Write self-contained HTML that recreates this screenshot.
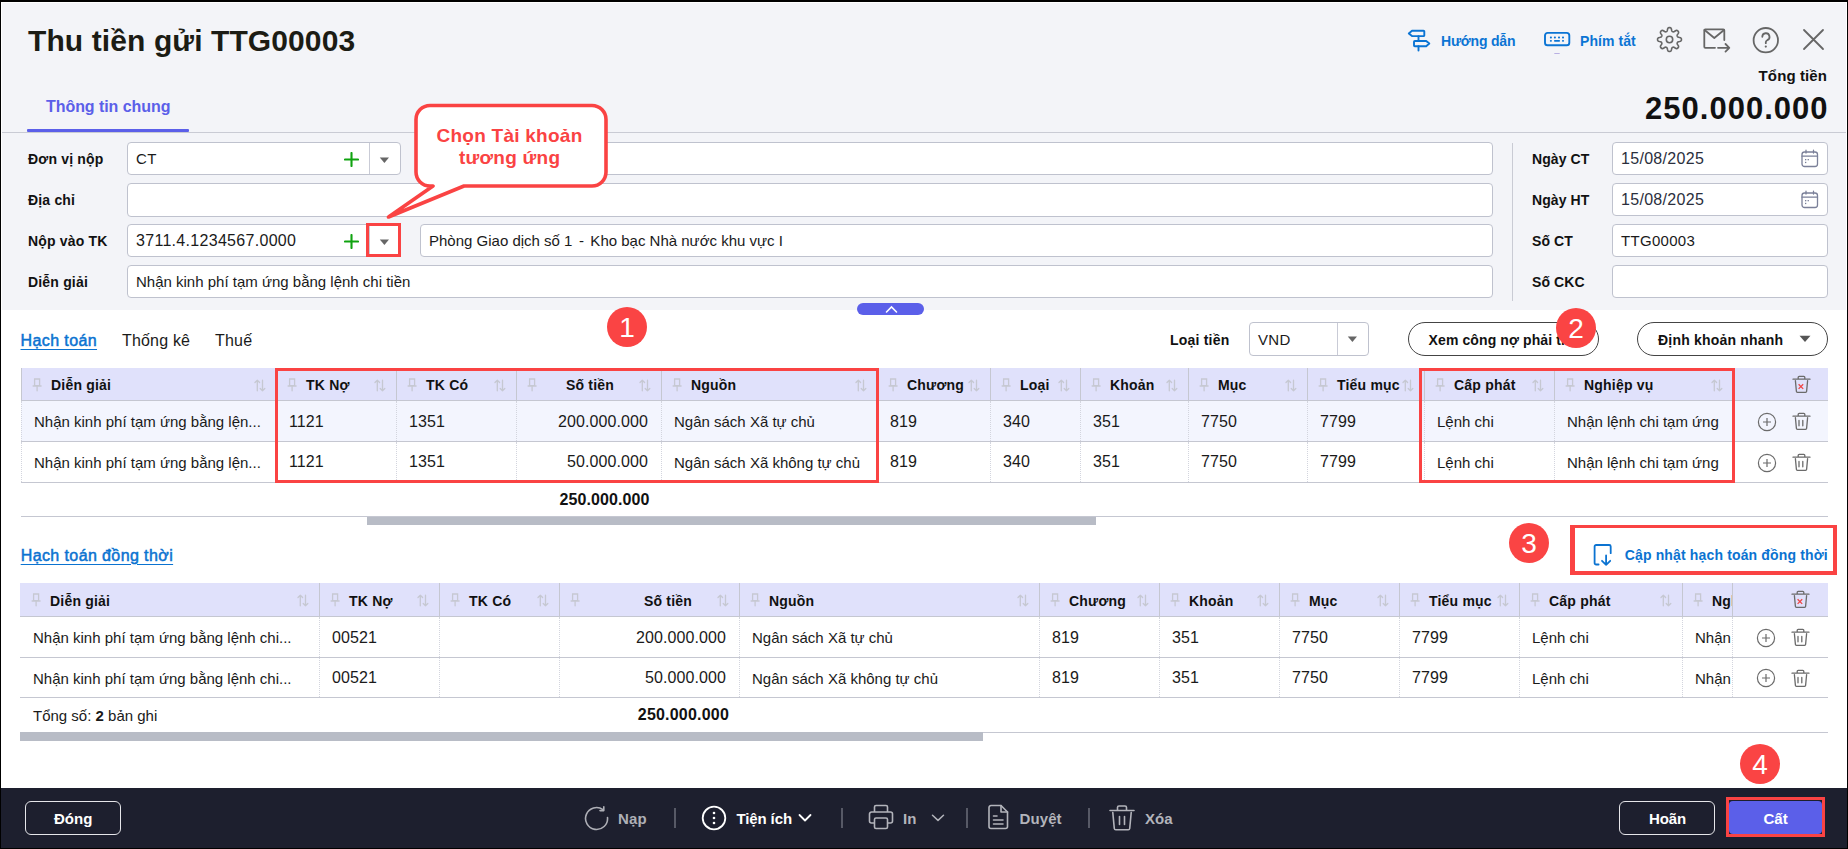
<!DOCTYPE html><html><head><meta charset="utf-8"><style>
html,body{margin:0;padding:0;}
body{width:1848px;height:849px;overflow:hidden;background:#000;position:relative;font-family:'Liberation Sans', sans-serif;}
.t{position:absolute;white-space:nowrap;font-family:'Liberation Sans', sans-serif;}
.r{position:absolute;box-sizing:border-box;}
</style></head><body>
<div class="r" style="left:1px;top:2px;width:1846px;height:846px;background:#fff;"></div>
<div class="r" style="left:2px;top:3px;width:1844px;height:307px;background:#f3f4f8;"></div>
<div class="r" style="left:1px;top:788px;width:1846px;height:60px;background:#1d1f2e;"></div>
<div class="t" style="left:28px;top:25.6px;font-size:30px;line-height:30px;font-weight:bold;color:#1c1c14;letter-spacing:0.1px;">Thu tiền gửi TTG00003</div>
<svg class="r" style="left:1406px;top:28px" width="26" height="25" viewBox="0 0 26 25"><g fill="none" stroke="#0b74d4" stroke-width="1.9" stroke-linejoin="round" stroke-linecap="round"><path d="M6 2.8 H17.5 a0.8 0.8 0 0 1 0.8 .8 V7.3 a0.8 .8 0 0 1 -.8 .8 H6 L2.8 5.4 Z"/><path d="M8.8 13 H20.2 L23.3 15.6 L20.2 18.2 H8.8 a.8 .8 0 0 1 -.8 -.8 V13.8 a.8 .8 0 0 1 .8 -.8Z"/><path d="M12.5 8.1 V13 M12.5 18.2 V22.6"/></g></svg>
<div class="t" style="left:1441px;top:33.8px;font-size:14px;line-height:14px;font-weight:bold;color:#0b74d4;letter-spacing:-0.2px;">Hướng dẫn</div>
<svg class="r" style="left:1543px;top:31px" width="28" height="24" viewBox="0 0 28 24"><g fill="none" stroke="#0b74d4" stroke-width="1.9"><rect x="2" y="1.9" width="24.3" height="12.4" rx="2.6"/></g><g fill="#0b74d4"><rect x="6.9" y="5.6" width="2" height="1.9" rx=".8"/><rect x="10.9" y="5.6" width="2" height="1.9" rx=".8"/><rect x="15" y="5.6" width="2" height="1.9" rx=".8"/><rect x="19" y="5.6" width="2" height="1.9" rx=".8"/><rect x="6.9" y="8.9" width="2" height="1.9" rx=".8"/><rect x="11" y="8.9" width="6" height="1.9" rx=".8"/><rect x="19" y="8.9" width="2" height="1.9" rx=".8"/><rect x="11.3" y="22" width="5.4" height="0.9" fill="#b3a9e0"/></g></svg>
<div class="t" style="left:1580px;top:33.8px;font-size:14px;line-height:14px;font-weight:bold;color:#0b74d4;letter-spacing:0.07px;">Phím tắt</div>
<svg class="r" style="left:1656px;top:25.8px" width="27" height="27" viewBox="0 0 27 27"><g fill="none" stroke="#666" stroke-width="1.6" stroke-linejoin="round"><path d="M25.45 13.50 L25.42 13.97 L25.30 14.43 L25.02 14.86 L24.43 15.23 L23.50 15.49 L22.57 15.68 L21.97 15.89 L21.65 16.15 L21.45 16.43 L21.31 16.73 L21.20 17.05 L21.13 17.39 L21.18 17.80 L21.46 18.38 L21.98 19.17 L22.46 20.01 L22.61 20.68 L22.50 21.19 L22.26 21.60 L21.95 21.95 L21.60 22.26 L21.19 22.50 L20.68 22.61 L20.01 22.46 L19.17 21.98 L18.38 21.46 L17.80 21.18 L17.39 21.13 L17.05 21.20 L16.73 21.31 L16.43 21.45 L16.15 21.65 L15.89 21.97 L15.68 22.57 L15.49 23.50 L15.23 24.43 L14.86 25.02 L14.43 25.30 L13.97 25.42 L13.50 25.45 L13.03 25.42 L12.57 25.30 L12.14 25.02 L11.77 24.43 L11.51 23.50 L11.32 22.57 L11.11 21.97 L10.85 21.65 L10.57 21.45 L10.27 21.31 L9.95 21.20 L9.61 21.13 L9.20 21.18 L8.62 21.46 L7.83 21.98 L6.99 22.46 L6.32 22.61 L5.81 22.50 L5.40 22.26 L5.05 21.95 L4.74 21.60 L4.50 21.19 L4.39 20.68 L4.54 20.01 L5.02 19.17 L5.54 18.38 L5.82 17.80 L5.87 17.39 L5.80 17.05 L5.69 16.73 L5.55 16.43 L5.35 16.15 L5.03 15.89 L4.43 15.68 L3.50 15.49 L2.57 15.23 L1.98 14.86 L1.70 14.43 L1.58 13.97 L1.55 13.50 L1.58 13.03 L1.70 12.57 L1.98 12.14 L2.57 11.77 L3.50 11.51 L4.43 11.32 L5.03 11.11 L5.35 10.85 L5.55 10.57 L5.69 10.27 L5.80 9.95 L5.87 9.61 L5.82 9.20 L5.54 8.62 L5.02 7.83 L4.54 6.99 L4.39 6.32 L4.50 5.81 L4.74 5.40 L5.05 5.05 L5.40 4.74 L5.81 4.50 L6.32 4.39 L6.99 4.54 L7.83 5.02 L8.62 5.54 L9.20 5.82 L9.61 5.87 L9.95 5.80 L10.27 5.69 L10.57 5.55 L10.85 5.35 L11.11 5.03 L11.32 4.43 L11.51 3.50 L11.77 2.57 L12.14 1.98 L12.57 1.70 L13.03 1.58 L13.50 1.55 L13.97 1.58 L14.43 1.70 L14.86 1.98 L15.23 2.57 L15.49 3.50 L15.68 4.43 L15.89 5.03 L16.15 5.35 L16.43 5.55 L16.73 5.69 L17.05 5.80 L17.39 5.87 L17.80 5.82 L18.38 5.54 L19.17 5.02 L20.01 4.54 L20.68 4.39 L21.19 4.50 L21.60 4.74 L21.95 5.05 L22.26 5.40 L22.50 5.81 L22.61 6.32 L22.46 6.99 L21.98 7.83 L21.46 8.62 L21.18 9.20 L21.13 9.61 L21.20 9.95 L21.31 10.27 L21.45 10.57 L21.65 10.85 L21.97 11.11 L22.57 11.32 L23.50 11.51 L24.43 11.77 L25.02 12.14 L25.30 12.57 L25.42 13.03 Z"/><circle cx="13.5" cy="13.5" r="3.2"/></g></svg>
<svg class="r" style="left:1702px;top:27px" width="30" height="28" viewBox="0 0 30 28"><g fill="none" stroke="#666" stroke-width="1.8" stroke-linecap="round" stroke-linejoin="round"><path d="M22.3 13 V3.3 a1 1 0 0 0 -1 -1 H3.3 a1 1 0 0 0 -1 1 V19.8 a1 1 0 0 0 1 1 H13"/><path d="M2.6 3 L12.3 11 L22 3"/><path d="M16 20.8 H27.3 M23.5 17 L27.3 20.8 L23.5 24.6"/></g></svg>
<svg class="r" style="left:1752px;top:26px" width="28" height="28" viewBox="0 0 28 28"><g fill="none" stroke="#666" stroke-width="1.8" stroke-linecap="round"><circle cx="13.8" cy="14.2" r="12.2"/><path d="M10.3 10.8 a3.6 3.6 0 1 1 4.9 3.4 c-.9 .4 -1.4 1 -1.4 2 v1"/></g><circle cx="13.8" cy="20.6" r="1.1" fill="#666"/></svg>
<svg class="r" style="left:1801px;top:27px" width="25" height="25" viewBox="0 0 25 25"><g stroke="#666" stroke-width="1.8" stroke-linecap="round"><path d="M3 3 L22 22 M22 3 L3 22"/></g></svg>
<div class="t" style="right:21px;text-align:right;top:68.3px;font-size:15px;line-height:15px;font-weight:bold;color:#111;letter-spacing:0.1px;">Tổng tiền</div>
<div class="t" style="right:19.5px;text-align:right;top:93.3px;font-size:31px;line-height:31px;font-weight:bold;color:#111;letter-spacing:1.0px;">250.000.000</div>
<div class="t" style="left:46px;top:99.3px;font-size:16px;line-height:16px;font-weight:bold;color:#5b5fe9;letter-spacing:-0.06px;">Thông tin chung</div>
<div class="r" style="left:27px;top:129px;width:162px;height:3px;background:#5b5fe9;border-radius:1px;"></div>
<div class="r" style="left:2px;top:132px;width:1844px;height:1px;background:#c9cbd4;"></div>
<div class="t" style="left:28px;top:152.4px;font-size:14px;line-height:14px;font-weight:bold;color:#111;letter-spacing:0.18px;">Đơn vị nộp</div>
<div class="t" style="left:28px;top:193.4px;font-size:14px;line-height:14px;font-weight:bold;color:#111;letter-spacing:0.18px;">Địa chỉ</div>
<div class="t" style="left:28px;top:234.4px;font-size:14px;line-height:14px;font-weight:bold;color:#111;letter-spacing:0.18px;">Nộp vào TK</div>
<div class="t" style="left:28px;top:275.4px;font-size:14px;line-height:14px;font-weight:bold;color:#111;letter-spacing:0.18px;">Diễn giải</div>
<div class="r" style="left:127px;top:142px;width:274px;height:33px;background:#fff;border:1px solid #bfc2ce;border-radius:4px;"></div>
<div class="r" style="left:420px;top:142px;width:1073px;height:33px;background:#fff;border:1px solid #bfc2ce;border-radius:4px;"></div>
<div class="r" style="left:127px;top:183px;width:1366px;height:33.5px;background:#fff;border:1px solid #bfc2ce;border-radius:4px;"></div>
<div class="r" style="left:127px;top:224px;width:274px;height:33px;background:#fff;border:1px solid #bfc2ce;border-radius:4px;"></div>
<div class="r" style="left:420px;top:224px;width:1073px;height:33px;background:#fff;border:1px solid #bfc2ce;border-radius:4px;"></div>
<div class="r" style="left:127px;top:265px;width:1366px;height:33px;background:#fff;border:1px solid #bfc2ce;border-radius:4px;"></div>
<div class="r" style="left:369px;top:143px;width:1px;height:31px;background:#c9cbd6;"></div>
<svg class="r" style="left:344px;top:151.5px" width="15" height="15" viewBox="0 0 15 15"><g stroke="#10a310" stroke-width="2.1" stroke-linecap="round"><path d="M7.5 1 V14 M1 7.5 H14"/></g></svg>
<svg class="r" style="left:379px;top:156.5px" width="11" height="7" viewBox="0 0 11 7"><path d="M0.8 0.5 H10 L5.4 6 Z" fill="#666"/></svg>
<div class="r" style="left:369px;top:225px;width:1px;height:31px;background:#c9cbd6;"></div>
<svg class="r" style="left:344px;top:233.5px" width="15" height="15" viewBox="0 0 15 15"><g stroke="#10a310" stroke-width="2.1" stroke-linecap="round"><path d="M7.5 1 V14 M1 7.5 H14"/></g></svg>
<svg class="r" style="left:379px;top:238.5px" width="11" height="7" viewBox="0 0 11 7"><path d="M0.8 0.5 H10 L5.4 6 Z" fill="#666"/></svg>
<div class="t" style="left:136px;top:151.3px;font-size:15px;line-height:15px;font-weight:normal;color:#1a1a1a;letter-spacing:0.3px;">CT</div>
<div class="t" style="left:136px;top:232.5px;font-size:16px;line-height:16px;font-weight:normal;color:#1a1a1a;letter-spacing:0.3px;">3711.4.1234567.0000</div>
<div class="t" style="left:429px;top:233.3px;font-size:15px;line-height:15px;font-weight:normal;color:#1a1a1a;letter-spacing:0.0px;">Phòng Giao dịch số 1 <span style="margin:0 2.3px">-</span> Kho bạc Nhà nước khu vực I</div>
<div class="t" style="left:136px;top:274.3px;font-size:15px;line-height:15px;font-weight:normal;color:#1a1a1a;letter-spacing:0.0px;">Nhận kinh phí tạm ứng bằng lệnh chi tiền</div>
<div class="r" style="left:1512px;top:143px;width:1px;height:158px;background:#c9cbd4;"></div>
<div class="t" style="left:1532px;top:152.4px;font-size:14px;line-height:14px;font-weight:bold;color:#111;letter-spacing:0.1px;">Ngày CT</div>
<div class="r" style="left:1612px;top:142px;width:216px;height:33px;background:#fff;border:1px solid #bfc2ce;border-radius:4px;"></div>
<div class="t" style="left:1532px;top:193.4px;font-size:14px;line-height:14px;font-weight:bold;color:#111;letter-spacing:0.1px;">Ngày HT</div>
<div class="r" style="left:1612px;top:183px;width:216px;height:33px;background:#fff;border:1px solid #bfc2ce;border-radius:4px;"></div>
<div class="t" style="left:1532px;top:234.4px;font-size:14px;line-height:14px;font-weight:bold;color:#111;letter-spacing:0.1px;">Số CT</div>
<div class="r" style="left:1612px;top:224px;width:216px;height:33px;background:#fff;border:1px solid #bfc2ce;border-radius:4px;"></div>
<div class="t" style="left:1532px;top:275.4px;font-size:14px;line-height:14px;font-weight:bold;color:#111;letter-spacing:0.1px;">Số CKC</div>
<div class="r" style="left:1612px;top:265px;width:216px;height:33px;background:#fff;border:1px solid #bfc2ce;border-radius:4px;"></div>
<div class="t" style="left:1621px;top:150.8px;font-size:16px;line-height:16px;font-weight:normal;color:#2b2f3d;letter-spacing:0.3px;">15/08/2025</div>
<div class="t" style="left:1621px;top:191.8px;font-size:16px;line-height:16px;font-weight:normal;color:#2b2f3d;letter-spacing:0.3px;">15/08/2025</div>
<div class="t" style="left:1621px;top:233.3px;font-size:15px;line-height:15px;font-weight:normal;color:#1a1a1a;letter-spacing:0.3px;">TTG00003</div>
<svg class="r" style="left:1800px;top:149px" width="20" height="19" viewBox="0 0 20 19"><g fill="none" stroke="#7b8099" stroke-width="1.3" stroke-linecap="round"><rect x="2" y="3" width="15.5" height="14.5" rx="2.5"/><path d="M2 7.2 H17.5 M6 1.2 V4 M13.5 1.2 V4"/></g><g fill="#7b8099"><rect x="5" y="10" width="1.3" height="1.3"/><rect x="7.6" y="10" width="1.3" height="1.3"/><rect x="5" y="12.8" width="1.3" height="1.3"/></g></svg>
<svg class="r" style="left:1800px;top:190px" width="20" height="19" viewBox="0 0 20 19"><g fill="none" stroke="#7b8099" stroke-width="1.3" stroke-linecap="round"><rect x="2" y="3" width="15.5" height="14.5" rx="2.5"/><path d="M2 7.2 H17.5 M6 1.2 V4 M13.5 1.2 V4"/></g><g fill="#7b8099"><rect x="5" y="10" width="1.3" height="1.3"/><rect x="7.6" y="10" width="1.3" height="1.3"/><rect x="5" y="12.8" width="1.3" height="1.3"/></g></svg>
<div class="r" style="left:366px;top:223px;width:35px;height:34px;border:3px solid #fa4343;"></div>
<svg class="r" style="left:380px;top:98px" width="235" height="125" viewBox="0 0 235 125"><path d="M50 7.5 H212 a14 14 0 0 1 14 14 V74 a14 14 0 0 1 -14 14 H84 L8.5 119 L53 88 H50 a14 14 0 0 1 -14 -14 V21.5 a14 14 0 0 1 14 -14 Z" fill="#fff" stroke="#fa4343" stroke-width="3.6" stroke-linejoin="round"/></svg>
<div class="t" style="left:436.5px;top:125.7px;font-size:19px;line-height:19px;font-weight:bold;color:#fa4343;letter-spacing:0.25px;">Chọn Tài khoản</div>
<div class="t" style="left:459px;top:147.5px;font-size:19px;line-height:19px;font-weight:bold;color:#fa4343;letter-spacing:0.25px;">tương ứng</div>
<div class="r" style="left:857px;top:303px;width:67px;height:12px;background:#5b5fe9;border-radius:6px;"></div>
<svg class="r" style="left:884px;top:304px" width="15" height="10" viewBox="0 0 15 10"><path d="M2.5 8 L7.5 3 L12.5 8" fill="none" stroke="#fff" stroke-width="1.6" stroke-linecap="round"/></svg>
<div class="t" style="left:20.5px;top:332.5px;font-size:16px;line-height:16px;font-weight:normal;color:#0b73d1;letter-spacing:0.4px;-webkit-text-stroke:0.5px #0b73d1;text-decoration:underline;text-underline-offset:2.5px;text-decoration-thickness:1px;">Hạch toán</div>
<div class="t" style="left:122px;top:332.8px;font-size:16px;line-height:16px;font-weight:normal;color:#1a1a1a;letter-spacing:0.18px;">Thống kê</div>
<div class="t" style="left:215px;top:332.8px;font-size:16px;line-height:16px;font-weight:normal;color:#1a1a1a;letter-spacing:0.2px;">Thuế</div>
<div class="t" style="left:1170px;top:332.9px;font-size:14px;line-height:14px;font-weight:bold;color:#111;letter-spacing:0.21px;">Loại tiền</div>
<div class="r" style="left:1249px;top:322px;width:120px;height:34px;background:#fff;border:1px solid #bfc2ce;border-radius:4px;"></div>
<div class="r" style="left:1337px;top:323px;width:1px;height:32px;background:#c9cbd6;"></div>
<svg class="r" style="left:1347px;top:336px" width="11" height="7" viewBox="0 0 11 7"><path d="M0.8 0.5 H10 L5.4 6 Z" fill="#666"/></svg>
<div class="t" style="left:1258px;top:332.3px;font-size:15px;line-height:15px;font-weight:normal;color:#1a1a1a;letter-spacing:0.3px;">VND</div>
<div class="r" style="left:1408px;top:322px;width:191px;height:34px;border:1px solid #444;border-radius:17px;background:#fff;"></div>
<div class="t" style="left:1428.6px;top:333.1px;font-size:14px;line-height:14px;font-weight:bold;color:#111;letter-spacing:0.1px;">Xem công nợ phải thu</div>
<div class="r" style="left:1637px;top:322px;width:191px;height:34px;border:1px solid #444;border-radius:17px;background:#fff;"></div>
<div class="t" style="left:1658px;top:333.1px;font-size:14px;line-height:14px;font-weight:bold;color:#111;letter-spacing:0.2px;">Định khoản nhanh</div>
<svg class="r" style="left:1799px;top:335px" width="12" height="8" viewBox="0 0 12 8"><path d="M0.5 0.8 H11.5 L6 7 Z" fill="#555"/></svg>
<div class="r" style="left:21px;top:368px;width:1807px;height:33px;background:#e0e1fb;"></div>
<div class="r" style="left:21px;top:400px;width:1807px;height:1px;background:#c5c7d1;"></div>
<div class="r" style="left:21px;top:368px;width:1px;height:32px;background:#c5c7d1;"></div>
<div class="r" style="left:276px;top:368px;width:1px;height:32px;background:#c5c7d1;"></div>
<div class="r" style="left:396px;top:368px;width:1px;height:32px;background:#c5c7d1;"></div>
<div class="r" style="left:516px;top:368px;width:1px;height:32px;background:#c5c7d1;"></div>
<div class="r" style="left:661px;top:368px;width:1px;height:32px;background:#c5c7d1;"></div>
<div class="r" style="left:877px;top:368px;width:1px;height:32px;background:#c5c7d1;"></div>
<div class="r" style="left:990px;top:368px;width:1px;height:32px;background:#c5c7d1;"></div>
<div class="r" style="left:1080px;top:368px;width:1px;height:32px;background:#c5c7d1;"></div>
<div class="r" style="left:1188px;top:368px;width:1px;height:32px;background:#c5c7d1;"></div>
<div class="r" style="left:1307px;top:368px;width:1px;height:32px;background:#c5c7d1;"></div>
<div class="r" style="left:1424px;top:368px;width:1px;height:32px;background:#c5c7d1;"></div>
<div class="r" style="left:1554px;top:368px;width:1px;height:32px;background:#c5c7d1;"></div>
<div class="r" style="left:1733px;top:368px;width:1px;height:32px;background:#c5c7d1;"></div>
<svg class="r" style="left:31.5px;top:378px" width="10" height="14" viewBox="0 0 10 14"><g fill="none" stroke="#c6c8d2" stroke-width="1.3" stroke-linecap="round"><path d="M2.6 1 H7.6 V7.6 H2.6 Z M1.1 8 H9.1 M5.1 8 V12.8"/></g></svg>
<svg class="r" style="left:254px;top:378.5px" width="12" height="13" viewBox="0 0 12 13"><g fill="none" stroke="#c6c8d2" stroke-width="1.3" stroke-linecap="round" stroke-linejoin="round"><path d="M3.3 11.8 V1.2 M1 3.5 L3.3 1.2 L5.6 3.5 M8.5 1.2 V11.8 M6.2 9.5 L8.5 11.8 L10.8 9.5"/></g></svg>
<div class="t" style="left:51px;top:377.7px;font-size:14px;line-height:14px;font-weight:bold;color:#111;letter-spacing:0.2px;">Diễn giải</div>
<svg class="r" style="left:286.5px;top:378px" width="10" height="14" viewBox="0 0 10 14"><g fill="none" stroke="#c6c8d2" stroke-width="1.3" stroke-linecap="round"><path d="M2.6 1 H7.6 V7.6 H2.6 Z M1.1 8 H9.1 M5.1 8 V12.8"/></g></svg>
<svg class="r" style="left:374px;top:378.5px" width="12" height="13" viewBox="0 0 12 13"><g fill="none" stroke="#c6c8d2" stroke-width="1.3" stroke-linecap="round" stroke-linejoin="round"><path d="M3.3 11.8 V1.2 M1 3.5 L3.3 1.2 L5.6 3.5 M8.5 1.2 V11.8 M6.2 9.5 L8.5 11.8 L10.8 9.5"/></g></svg>
<div class="t" style="left:306px;top:377.7px;font-size:14px;line-height:14px;font-weight:bold;color:#111;letter-spacing:0.2px;">TK Nợ</div>
<svg class="r" style="left:406.5px;top:378px" width="10" height="14" viewBox="0 0 10 14"><g fill="none" stroke="#c6c8d2" stroke-width="1.3" stroke-linecap="round"><path d="M2.6 1 H7.6 V7.6 H2.6 Z M1.1 8 H9.1 M5.1 8 V12.8"/></g></svg>
<svg class="r" style="left:494px;top:378.5px" width="12" height="13" viewBox="0 0 12 13"><g fill="none" stroke="#c6c8d2" stroke-width="1.3" stroke-linecap="round" stroke-linejoin="round"><path d="M3.3 11.8 V1.2 M1 3.5 L3.3 1.2 L5.6 3.5 M8.5 1.2 V11.8 M6.2 9.5 L8.5 11.8 L10.8 9.5"/></g></svg>
<div class="t" style="left:426px;top:377.7px;font-size:14px;line-height:14px;font-weight:bold;color:#111;letter-spacing:0.2px;">TK Có</div>
<svg class="r" style="left:526.5px;top:378px" width="10" height="14" viewBox="0 0 10 14"><g fill="none" stroke="#c6c8d2" stroke-width="1.3" stroke-linecap="round"><path d="M2.6 1 H7.6 V7.6 H2.6 Z M1.1 8 H9.1 M5.1 8 V12.8"/></g></svg>
<svg class="r" style="left:639px;top:378.5px" width="12" height="13" viewBox="0 0 12 13"><g fill="none" stroke="#c6c8d2" stroke-width="1.3" stroke-linecap="round" stroke-linejoin="round"><path d="M3.3 11.8 V1.2 M1 3.5 L3.3 1.2 L5.6 3.5 M8.5 1.2 V11.8 M6.2 9.5 L8.5 11.8 L10.8 9.5"/></g></svg>
<div class="t" style="right:1234px;text-align:right;top:377.7px;font-size:14px;line-height:14px;font-weight:bold;color:#111;letter-spacing:0.2px;">Số tiền</div>
<svg class="r" style="left:671.5px;top:378px" width="10" height="14" viewBox="0 0 10 14"><g fill="none" stroke="#c6c8d2" stroke-width="1.3" stroke-linecap="round"><path d="M2.6 1 H7.6 V7.6 H2.6 Z M1.1 8 H9.1 M5.1 8 V12.8"/></g></svg>
<svg class="r" style="left:855px;top:378.5px" width="12" height="13" viewBox="0 0 12 13"><g fill="none" stroke="#c6c8d2" stroke-width="1.3" stroke-linecap="round" stroke-linejoin="round"><path d="M3.3 11.8 V1.2 M1 3.5 L3.3 1.2 L5.6 3.5 M8.5 1.2 V11.8 M6.2 9.5 L8.5 11.8 L10.8 9.5"/></g></svg>
<div class="t" style="left:691px;top:377.7px;font-size:14px;line-height:14px;font-weight:bold;color:#111;letter-spacing:0.2px;">Nguồn</div>
<svg class="r" style="left:887.5px;top:378px" width="10" height="14" viewBox="0 0 10 14"><g fill="none" stroke="#c6c8d2" stroke-width="1.3" stroke-linecap="round"><path d="M2.6 1 H7.6 V7.6 H2.6 Z M1.1 8 H9.1 M5.1 8 V12.8"/></g></svg>
<svg class="r" style="left:968px;top:378.5px" width="12" height="13" viewBox="0 0 12 13"><g fill="none" stroke="#c6c8d2" stroke-width="1.3" stroke-linecap="round" stroke-linejoin="round"><path d="M3.3 11.8 V1.2 M1 3.5 L3.3 1.2 L5.6 3.5 M8.5 1.2 V11.8 M6.2 9.5 L8.5 11.8 L10.8 9.5"/></g></svg>
<div class="t" style="left:907px;top:377.7px;font-size:14px;line-height:14px;font-weight:bold;color:#111;letter-spacing:0.2px;">Chương</div>
<svg class="r" style="left:1000.5px;top:378px" width="10" height="14" viewBox="0 0 10 14"><g fill="none" stroke="#c6c8d2" stroke-width="1.3" stroke-linecap="round"><path d="M2.6 1 H7.6 V7.6 H2.6 Z M1.1 8 H9.1 M5.1 8 V12.8"/></g></svg>
<svg class="r" style="left:1058px;top:378.5px" width="12" height="13" viewBox="0 0 12 13"><g fill="none" stroke="#c6c8d2" stroke-width="1.3" stroke-linecap="round" stroke-linejoin="round"><path d="M3.3 11.8 V1.2 M1 3.5 L3.3 1.2 L5.6 3.5 M8.5 1.2 V11.8 M6.2 9.5 L8.5 11.8 L10.8 9.5"/></g></svg>
<div class="t" style="left:1020px;top:377.7px;font-size:14px;line-height:14px;font-weight:bold;color:#111;letter-spacing:0.2px;">Loại</div>
<svg class="r" style="left:1090.5px;top:378px" width="10" height="14" viewBox="0 0 10 14"><g fill="none" stroke="#c6c8d2" stroke-width="1.3" stroke-linecap="round"><path d="M2.6 1 H7.6 V7.6 H2.6 Z M1.1 8 H9.1 M5.1 8 V12.8"/></g></svg>
<svg class="r" style="left:1166px;top:378.5px" width="12" height="13" viewBox="0 0 12 13"><g fill="none" stroke="#c6c8d2" stroke-width="1.3" stroke-linecap="round" stroke-linejoin="round"><path d="M3.3 11.8 V1.2 M1 3.5 L3.3 1.2 L5.6 3.5 M8.5 1.2 V11.8 M6.2 9.5 L8.5 11.8 L10.8 9.5"/></g></svg>
<div class="t" style="left:1110px;top:377.7px;font-size:14px;line-height:14px;font-weight:bold;color:#111;letter-spacing:0.2px;">Khoản</div>
<svg class="r" style="left:1198.5px;top:378px" width="10" height="14" viewBox="0 0 10 14"><g fill="none" stroke="#c6c8d2" stroke-width="1.3" stroke-linecap="round"><path d="M2.6 1 H7.6 V7.6 H2.6 Z M1.1 8 H9.1 M5.1 8 V12.8"/></g></svg>
<svg class="r" style="left:1285px;top:378.5px" width="12" height="13" viewBox="0 0 12 13"><g fill="none" stroke="#c6c8d2" stroke-width="1.3" stroke-linecap="round" stroke-linejoin="round"><path d="M3.3 11.8 V1.2 M1 3.5 L3.3 1.2 L5.6 3.5 M8.5 1.2 V11.8 M6.2 9.5 L8.5 11.8 L10.8 9.5"/></g></svg>
<div class="t" style="left:1218px;top:377.7px;font-size:14px;line-height:14px;font-weight:bold;color:#111;letter-spacing:0.2px;">Mục</div>
<svg class="r" style="left:1317.5px;top:378px" width="10" height="14" viewBox="0 0 10 14"><g fill="none" stroke="#c6c8d2" stroke-width="1.3" stroke-linecap="round"><path d="M2.6 1 H7.6 V7.6 H2.6 Z M1.1 8 H9.1 M5.1 8 V12.8"/></g></svg>
<svg class="r" style="left:1402px;top:378.5px" width="12" height="13" viewBox="0 0 12 13"><g fill="none" stroke="#c6c8d2" stroke-width="1.3" stroke-linecap="round" stroke-linejoin="round"><path d="M3.3 11.8 V1.2 M1 3.5 L3.3 1.2 L5.6 3.5 M8.5 1.2 V11.8 M6.2 9.5 L8.5 11.8 L10.8 9.5"/></g></svg>
<div class="t" style="left:1337px;top:377.7px;font-size:14px;line-height:14px;font-weight:bold;color:#111;letter-spacing:0.2px;">Tiểu mục</div>
<svg class="r" style="left:1434.5px;top:378px" width="10" height="14" viewBox="0 0 10 14"><g fill="none" stroke="#c6c8d2" stroke-width="1.3" stroke-linecap="round"><path d="M2.6 1 H7.6 V7.6 H2.6 Z M1.1 8 H9.1 M5.1 8 V12.8"/></g></svg>
<svg class="r" style="left:1532px;top:378.5px" width="12" height="13" viewBox="0 0 12 13"><g fill="none" stroke="#c6c8d2" stroke-width="1.3" stroke-linecap="round" stroke-linejoin="round"><path d="M3.3 11.8 V1.2 M1 3.5 L3.3 1.2 L5.6 3.5 M8.5 1.2 V11.8 M6.2 9.5 L8.5 11.8 L10.8 9.5"/></g></svg>
<div class="t" style="left:1454px;top:377.7px;font-size:14px;line-height:14px;font-weight:bold;color:#111;letter-spacing:0.2px;">Cấp phát</div>
<svg class="r" style="left:1564.5px;top:378px" width="10" height="14" viewBox="0 0 10 14"><g fill="none" stroke="#c6c8d2" stroke-width="1.3" stroke-linecap="round"><path d="M2.6 1 H7.6 V7.6 H2.6 Z M1.1 8 H9.1 M5.1 8 V12.8"/></g></svg>
<svg class="r" style="left:1711px;top:378.5px" width="12" height="13" viewBox="0 0 12 13"><g fill="none" stroke="#c6c8d2" stroke-width="1.3" stroke-linecap="round" stroke-linejoin="round"><path d="M3.3 11.8 V1.2 M1 3.5 L3.3 1.2 L5.6 3.5 M8.5 1.2 V11.8 M6.2 9.5 L8.5 11.8 L10.8 9.5"/></g></svg>
<div class="t" style="left:1584px;top:377.7px;font-size:14px;line-height:14px;font-weight:bold;color:#111;letter-spacing:0.2px;">Nghiệp vụ</div>
<svg class="r" style="left:1792px;top:375px" width="19" height="19" viewBox="0 0 19 19"><g fill="none" stroke="#6b6b6b" stroke-width="1.3" stroke-linecap="round" stroke-linejoin="round"><path d="M1 4.2 H18 M6.2 4.2 V2.3 a1 1 0 0 1 1 -1 H11.8 a1 1 0 0 1 1 1 V4.2 M3.4 5.6 L4.4 16.4 a1 1 0 0 0 1 .9 H13.6 a1 1 0 0 0 1 -.9 L15.6 5.6"/></g><path d="M6.6 9.3 L11.2 13.9 M11.2 9.3 L6.6 13.9" stroke="#f04545" stroke-width="1.3"/></svg>
<div class="r" style="left:21px;top:401px;width:1807px;height:41px;background:#f3f5fe;"></div>
<div class="r" style="left:21px;top:441px;width:1807px;height:1px;background:#c5c7d1;"></div>
<div class="r" style="left:21px;top:401px;width:1px;height:40px;border-left:1px dotted #d3d5de;"></div>
<div class="r" style="left:276px;top:401px;width:1px;height:40px;border-left:1px dotted #d3d5de;"></div>
<div class="r" style="left:396px;top:401px;width:1px;height:40px;border-left:1px dotted #d3d5de;"></div>
<div class="r" style="left:516px;top:401px;width:1px;height:40px;border-left:1px dotted #d3d5de;"></div>
<div class="r" style="left:661px;top:401px;width:1px;height:40px;border-left:1px dotted #d3d5de;"></div>
<div class="r" style="left:877px;top:401px;width:1px;height:40px;border-left:1px dotted #d3d5de;"></div>
<div class="r" style="left:990px;top:401px;width:1px;height:40px;border-left:1px dotted #d3d5de;"></div>
<div class="r" style="left:1080px;top:401px;width:1px;height:40px;border-left:1px dotted #d3d5de;"></div>
<div class="r" style="left:1188px;top:401px;width:1px;height:40px;border-left:1px dotted #d3d5de;"></div>
<div class="r" style="left:1307px;top:401px;width:1px;height:40px;border-left:1px dotted #d3d5de;"></div>
<div class="r" style="left:1424px;top:401px;width:1px;height:40px;border-left:1px dotted #d3d5de;"></div>
<div class="r" style="left:1554px;top:401px;width:1px;height:40px;border-left:1px dotted #d3d5de;"></div>
<div class="r" style="left:1733px;top:401px;width:1px;height:40px;border-left:1px dotted #d3d5de;"></div>
<div class="t" style="left:34px;top:414.3px;font-size:15px;line-height:15px;font-weight:normal;color:#1a1a1a;letter-spacing:0px;">Nhận kinh phí tạm ứng bằng lện...</div>
<div class="t" style="left:289px;top:413.5px;font-size:16px;line-height:16px;font-weight:normal;color:#1a1a1a;letter-spacing:0.1px;">1121</div>
<div class="t" style="left:409px;top:413.5px;font-size:16px;line-height:16px;font-weight:normal;color:#1a1a1a;letter-spacing:0.1px;">1351</div>
<div class="t" style="right:1200px;text-align:right;top:413.5px;font-size:16px;line-height:16px;font-weight:normal;color:#1a1a1a;letter-spacing:0.1px;">200.000.000</div>
<div class="t" style="left:674px;top:414.3px;font-size:15px;line-height:15px;font-weight:normal;color:#1a1a1a;letter-spacing:0px;">Ngân sách Xã tự chủ</div>
<div class="t" style="left:890px;top:413.5px;font-size:16px;line-height:16px;font-weight:normal;color:#1a1a1a;letter-spacing:0.1px;">819</div>
<div class="t" style="left:1003px;top:413.5px;font-size:16px;line-height:16px;font-weight:normal;color:#1a1a1a;letter-spacing:0.1px;">340</div>
<div class="t" style="left:1093px;top:413.5px;font-size:16px;line-height:16px;font-weight:normal;color:#1a1a1a;letter-spacing:0.1px;">351</div>
<div class="t" style="left:1201px;top:413.5px;font-size:16px;line-height:16px;font-weight:normal;color:#1a1a1a;letter-spacing:0.1px;">7750</div>
<div class="t" style="left:1320px;top:413.5px;font-size:16px;line-height:16px;font-weight:normal;color:#1a1a1a;letter-spacing:0.1px;">7799</div>
<div class="t" style="left:1437px;top:414.3px;font-size:15px;line-height:15px;font-weight:normal;color:#1a1a1a;letter-spacing:0px;">Lệnh chi</div>
<div class="t" style="left:1567px;top:414.3px;font-size:15px;line-height:15px;font-weight:normal;color:#1a1a1a;letter-spacing:0px;">Nhận lệnh chi tạm ứng</div>
<svg class="r" style="left:1756.5px;top:411.5px" width="20" height="20" viewBox="0 0 20 20"><g fill="none" stroke="#6b6b6b" stroke-width="1.2"><circle cx="10" cy="10" r="8.6"/><path d="M10 6 V14 M6 10 H14"/></g></svg>
<svg class="r" style="left:1791.5px;top:412px" width="19" height="19" viewBox="0 0 19 19"><g fill="none" stroke="#6b6b6b" stroke-width="1.3" stroke-linecap="round" stroke-linejoin="round"><path d="M1 4.2 H18 M6.2 4.2 V2.3 a1 1 0 0 1 1 -1 H11.8 a1 1 0 0 1 1 1 V4.2 M3.4 5.6 L4.4 16.4 a1 1 0 0 0 1 .9 H13.6 a1 1 0 0 0 1 -.9 L15.6 5.6"/><path d="M7 8.5 V13.8 M10.8 8.5 V13.8" /></g></svg>
<div class="r" style="left:21px;top:442px;width:1807px;height:41px;background:#fff;"></div>
<div class="r" style="left:21px;top:482px;width:1807px;height:1px;background:#c5c7d1;"></div>
<div class="r" style="left:21px;top:442px;width:1px;height:40px;border-left:1px dotted #d3d5de;"></div>
<div class="r" style="left:276px;top:442px;width:1px;height:40px;border-left:1px dotted #d3d5de;"></div>
<div class="r" style="left:396px;top:442px;width:1px;height:40px;border-left:1px dotted #d3d5de;"></div>
<div class="r" style="left:516px;top:442px;width:1px;height:40px;border-left:1px dotted #d3d5de;"></div>
<div class="r" style="left:661px;top:442px;width:1px;height:40px;border-left:1px dotted #d3d5de;"></div>
<div class="r" style="left:877px;top:442px;width:1px;height:40px;border-left:1px dotted #d3d5de;"></div>
<div class="r" style="left:990px;top:442px;width:1px;height:40px;border-left:1px dotted #d3d5de;"></div>
<div class="r" style="left:1080px;top:442px;width:1px;height:40px;border-left:1px dotted #d3d5de;"></div>
<div class="r" style="left:1188px;top:442px;width:1px;height:40px;border-left:1px dotted #d3d5de;"></div>
<div class="r" style="left:1307px;top:442px;width:1px;height:40px;border-left:1px dotted #d3d5de;"></div>
<div class="r" style="left:1424px;top:442px;width:1px;height:40px;border-left:1px dotted #d3d5de;"></div>
<div class="r" style="left:1554px;top:442px;width:1px;height:40px;border-left:1px dotted #d3d5de;"></div>
<div class="r" style="left:1733px;top:442px;width:1px;height:40px;border-left:1px dotted #d3d5de;"></div>
<div class="t" style="left:34px;top:454.8px;font-size:15px;line-height:15px;font-weight:normal;color:#1a1a1a;letter-spacing:0px;">Nhận kinh phí tạm ứng bằng lện...</div>
<div class="t" style="left:289px;top:454.0px;font-size:16px;line-height:16px;font-weight:normal;color:#1a1a1a;letter-spacing:0.1px;">1121</div>
<div class="t" style="left:409px;top:454.0px;font-size:16px;line-height:16px;font-weight:normal;color:#1a1a1a;letter-spacing:0.1px;">1351</div>
<div class="t" style="right:1200px;text-align:right;top:454.0px;font-size:16px;line-height:16px;font-weight:normal;color:#1a1a1a;letter-spacing:0.1px;">50.000.000</div>
<div class="t" style="left:674px;top:454.8px;font-size:15px;line-height:15px;font-weight:normal;color:#1a1a1a;letter-spacing:0px;">Ngân sách Xã không tự chủ</div>
<div class="t" style="left:890px;top:454.0px;font-size:16px;line-height:16px;font-weight:normal;color:#1a1a1a;letter-spacing:0.1px;">819</div>
<div class="t" style="left:1003px;top:454.0px;font-size:16px;line-height:16px;font-weight:normal;color:#1a1a1a;letter-spacing:0.1px;">340</div>
<div class="t" style="left:1093px;top:454.0px;font-size:16px;line-height:16px;font-weight:normal;color:#1a1a1a;letter-spacing:0.1px;">351</div>
<div class="t" style="left:1201px;top:454.0px;font-size:16px;line-height:16px;font-weight:normal;color:#1a1a1a;letter-spacing:0.1px;">7750</div>
<div class="t" style="left:1320px;top:454.0px;font-size:16px;line-height:16px;font-weight:normal;color:#1a1a1a;letter-spacing:0.1px;">7799</div>
<div class="t" style="left:1437px;top:454.8px;font-size:15px;line-height:15px;font-weight:normal;color:#1a1a1a;letter-spacing:0px;">Lệnh chi</div>
<div class="t" style="left:1567px;top:454.8px;font-size:15px;line-height:15px;font-weight:normal;color:#1a1a1a;letter-spacing:0px;">Nhận lệnh chi tạm ứng</div>
<svg class="r" style="left:1756.5px;top:452.5px" width="20" height="20" viewBox="0 0 20 20"><g fill="none" stroke="#6b6b6b" stroke-width="1.2"><circle cx="10" cy="10" r="8.6"/><path d="M10 6 V14 M6 10 H14"/></g></svg>
<svg class="r" style="left:1791.5px;top:453px" width="19" height="19" viewBox="0 0 19 19"><g fill="none" stroke="#6b6b6b" stroke-width="1.3" stroke-linecap="round" stroke-linejoin="round"><path d="M1 4.2 H18 M6.2 4.2 V2.3 a1 1 0 0 1 1 -1 H11.8 a1 1 0 0 1 1 1 V4.2 M3.4 5.6 L4.4 16.4 a1 1 0 0 0 1 .9 H13.6 a1 1 0 0 0 1 -.9 L15.6 5.6"/><path d="M7 8.5 V13.8 M10.8 8.5 V13.8" /></g></svg>
<div class="t" style="right:1198.5px;text-align:right;top:491.5px;font-size:16px;line-height:16px;font-weight:bold;color:#111;letter-spacing:0.1px;">250.000.000</div>
<div class="r" style="left:21px;top:516px;width:1807px;height:1px;background:#c5c7d1;"></div>
<div class="r" style="left:367px;top:516.5px;width:729px;height:8.5px;background:#b8bcc6;"></div>
<div class="r" style="left:20px;top:583px;width:1808px;height:34px;background:#e0e1fb;"></div>
<div class="r" style="left:20px;top:616px;width:1808px;height:1px;background:#c5c7d1;"></div>
<div class="r" style="left:319px;top:583px;width:1px;height:33px;background:#c5c7d1;"></div>
<div class="r" style="left:439px;top:583px;width:1px;height:33px;background:#c5c7d1;"></div>
<div class="r" style="left:559px;top:583px;width:1px;height:33px;background:#c5c7d1;"></div>
<div class="r" style="left:739px;top:583px;width:1px;height:33px;background:#c5c7d1;"></div>
<div class="r" style="left:1039px;top:583px;width:1px;height:33px;background:#c5c7d1;"></div>
<div class="r" style="left:1159px;top:583px;width:1px;height:33px;background:#c5c7d1;"></div>
<div class="r" style="left:1279px;top:583px;width:1px;height:33px;background:#c5c7d1;"></div>
<div class="r" style="left:1399px;top:583px;width:1px;height:33px;background:#c5c7d1;"></div>
<div class="r" style="left:1519px;top:583px;width:1px;height:33px;background:#c5c7d1;"></div>
<div class="r" style="left:1682px;top:583px;width:1px;height:33px;background:#c5c7d1;"></div>
<div class="r" style="left:1732px;top:583px;width:1px;height:33px;background:#c5c7d1;"></div>
<svg class="r" style="left:30.5px;top:593px" width="10" height="14" viewBox="0 0 10 14"><g fill="none" stroke="#c6c8d2" stroke-width="1.3" stroke-linecap="round"><path d="M2.6 1 H7.6 V7.6 H2.6 Z M1.1 8 H9.1 M5.1 8 V12.8"/></g></svg>
<svg class="r" style="left:297px;top:593.5px" width="12" height="13" viewBox="0 0 12 13"><g fill="none" stroke="#c6c8d2" stroke-width="1.3" stroke-linecap="round" stroke-linejoin="round"><path d="M3.3 11.8 V1.2 M1 3.5 L3.3 1.2 L5.6 3.5 M8.5 1.2 V11.8 M6.2 9.5 L8.5 11.8 L10.8 9.5"/></g></svg>
<div class="t" style="left:50px;top:593.7px;font-size:14px;line-height:14px;font-weight:bold;color:#111;letter-spacing:0.2px;">Diễn giải</div>
<svg class="r" style="left:329.5px;top:593px" width="10" height="14" viewBox="0 0 10 14"><g fill="none" stroke="#c6c8d2" stroke-width="1.3" stroke-linecap="round"><path d="M2.6 1 H7.6 V7.6 H2.6 Z M1.1 8 H9.1 M5.1 8 V12.8"/></g></svg>
<svg class="r" style="left:417px;top:593.5px" width="12" height="13" viewBox="0 0 12 13"><g fill="none" stroke="#c6c8d2" stroke-width="1.3" stroke-linecap="round" stroke-linejoin="round"><path d="M3.3 11.8 V1.2 M1 3.5 L3.3 1.2 L5.6 3.5 M8.5 1.2 V11.8 M6.2 9.5 L8.5 11.8 L10.8 9.5"/></g></svg>
<div class="t" style="left:349px;top:593.7px;font-size:14px;line-height:14px;font-weight:bold;color:#111;letter-spacing:0.2px;">TK Nợ</div>
<svg class="r" style="left:449.5px;top:593px" width="10" height="14" viewBox="0 0 10 14"><g fill="none" stroke="#c6c8d2" stroke-width="1.3" stroke-linecap="round"><path d="M2.6 1 H7.6 V7.6 H2.6 Z M1.1 8 H9.1 M5.1 8 V12.8"/></g></svg>
<svg class="r" style="left:537px;top:593.5px" width="12" height="13" viewBox="0 0 12 13"><g fill="none" stroke="#c6c8d2" stroke-width="1.3" stroke-linecap="round" stroke-linejoin="round"><path d="M3.3 11.8 V1.2 M1 3.5 L3.3 1.2 L5.6 3.5 M8.5 1.2 V11.8 M6.2 9.5 L8.5 11.8 L10.8 9.5"/></g></svg>
<div class="t" style="left:469px;top:593.7px;font-size:14px;line-height:14px;font-weight:bold;color:#111;letter-spacing:0.2px;">TK Có</div>
<svg class="r" style="left:569.5px;top:593px" width="10" height="14" viewBox="0 0 10 14"><g fill="none" stroke="#c6c8d2" stroke-width="1.3" stroke-linecap="round"><path d="M2.6 1 H7.6 V7.6 H2.6 Z M1.1 8 H9.1 M5.1 8 V12.8"/></g></svg>
<svg class="r" style="left:717px;top:593.5px" width="12" height="13" viewBox="0 0 12 13"><g fill="none" stroke="#c6c8d2" stroke-width="1.3" stroke-linecap="round" stroke-linejoin="round"><path d="M3.3 11.8 V1.2 M1 3.5 L3.3 1.2 L5.6 3.5 M8.5 1.2 V11.8 M6.2 9.5 L8.5 11.8 L10.8 9.5"/></g></svg>
<div class="t" style="right:1156px;text-align:right;top:593.7px;font-size:14px;line-height:14px;font-weight:bold;color:#111;letter-spacing:0.2px;">Số tiền</div>
<svg class="r" style="left:749.5px;top:593px" width="10" height="14" viewBox="0 0 10 14"><g fill="none" stroke="#c6c8d2" stroke-width="1.3" stroke-linecap="round"><path d="M2.6 1 H7.6 V7.6 H2.6 Z M1.1 8 H9.1 M5.1 8 V12.8"/></g></svg>
<svg class="r" style="left:1017px;top:593.5px" width="12" height="13" viewBox="0 0 12 13"><g fill="none" stroke="#c6c8d2" stroke-width="1.3" stroke-linecap="round" stroke-linejoin="round"><path d="M3.3 11.8 V1.2 M1 3.5 L3.3 1.2 L5.6 3.5 M8.5 1.2 V11.8 M6.2 9.5 L8.5 11.8 L10.8 9.5"/></g></svg>
<div class="t" style="left:769px;top:593.7px;font-size:14px;line-height:14px;font-weight:bold;color:#111;letter-spacing:0.2px;">Nguồn</div>
<svg class="r" style="left:1049.5px;top:593px" width="10" height="14" viewBox="0 0 10 14"><g fill="none" stroke="#c6c8d2" stroke-width="1.3" stroke-linecap="round"><path d="M2.6 1 H7.6 V7.6 H2.6 Z M1.1 8 H9.1 M5.1 8 V12.8"/></g></svg>
<svg class="r" style="left:1137px;top:593.5px" width="12" height="13" viewBox="0 0 12 13"><g fill="none" stroke="#c6c8d2" stroke-width="1.3" stroke-linecap="round" stroke-linejoin="round"><path d="M3.3 11.8 V1.2 M1 3.5 L3.3 1.2 L5.6 3.5 M8.5 1.2 V11.8 M6.2 9.5 L8.5 11.8 L10.8 9.5"/></g></svg>
<div class="t" style="left:1069px;top:593.7px;font-size:14px;line-height:14px;font-weight:bold;color:#111;letter-spacing:0.2px;">Chương</div>
<svg class="r" style="left:1169.5px;top:593px" width="10" height="14" viewBox="0 0 10 14"><g fill="none" stroke="#c6c8d2" stroke-width="1.3" stroke-linecap="round"><path d="M2.6 1 H7.6 V7.6 H2.6 Z M1.1 8 H9.1 M5.1 8 V12.8"/></g></svg>
<svg class="r" style="left:1257px;top:593.5px" width="12" height="13" viewBox="0 0 12 13"><g fill="none" stroke="#c6c8d2" stroke-width="1.3" stroke-linecap="round" stroke-linejoin="round"><path d="M3.3 11.8 V1.2 M1 3.5 L3.3 1.2 L5.6 3.5 M8.5 1.2 V11.8 M6.2 9.5 L8.5 11.8 L10.8 9.5"/></g></svg>
<div class="t" style="left:1189px;top:593.7px;font-size:14px;line-height:14px;font-weight:bold;color:#111;letter-spacing:0.2px;">Khoản</div>
<svg class="r" style="left:1289.5px;top:593px" width="10" height="14" viewBox="0 0 10 14"><g fill="none" stroke="#c6c8d2" stroke-width="1.3" stroke-linecap="round"><path d="M2.6 1 H7.6 V7.6 H2.6 Z M1.1 8 H9.1 M5.1 8 V12.8"/></g></svg>
<svg class="r" style="left:1377px;top:593.5px" width="12" height="13" viewBox="0 0 12 13"><g fill="none" stroke="#c6c8d2" stroke-width="1.3" stroke-linecap="round" stroke-linejoin="round"><path d="M3.3 11.8 V1.2 M1 3.5 L3.3 1.2 L5.6 3.5 M8.5 1.2 V11.8 M6.2 9.5 L8.5 11.8 L10.8 9.5"/></g></svg>
<div class="t" style="left:1309px;top:593.7px;font-size:14px;line-height:14px;font-weight:bold;color:#111;letter-spacing:0.2px;">Mục</div>
<svg class="r" style="left:1409.5px;top:593px" width="10" height="14" viewBox="0 0 10 14"><g fill="none" stroke="#c6c8d2" stroke-width="1.3" stroke-linecap="round"><path d="M2.6 1 H7.6 V7.6 H2.6 Z M1.1 8 H9.1 M5.1 8 V12.8"/></g></svg>
<svg class="r" style="left:1497px;top:593.5px" width="12" height="13" viewBox="0 0 12 13"><g fill="none" stroke="#c6c8d2" stroke-width="1.3" stroke-linecap="round" stroke-linejoin="round"><path d="M3.3 11.8 V1.2 M1 3.5 L3.3 1.2 L5.6 3.5 M8.5 1.2 V11.8 M6.2 9.5 L8.5 11.8 L10.8 9.5"/></g></svg>
<div class="t" style="left:1429px;top:593.7px;font-size:14px;line-height:14px;font-weight:bold;color:#111;letter-spacing:0.2px;">Tiểu mục</div>
<svg class="r" style="left:1529.5px;top:593px" width="10" height="14" viewBox="0 0 10 14"><g fill="none" stroke="#c6c8d2" stroke-width="1.3" stroke-linecap="round"><path d="M2.6 1 H7.6 V7.6 H2.6 Z M1.1 8 H9.1 M5.1 8 V12.8"/></g></svg>
<svg class="r" style="left:1660px;top:593.5px" width="12" height="13" viewBox="0 0 12 13"><g fill="none" stroke="#c6c8d2" stroke-width="1.3" stroke-linecap="round" stroke-linejoin="round"><path d="M3.3 11.8 V1.2 M1 3.5 L3.3 1.2 L5.6 3.5 M8.5 1.2 V11.8 M6.2 9.5 L8.5 11.8 L10.8 9.5"/></g></svg>
<div class="t" style="left:1549px;top:593.7px;font-size:14px;line-height:14px;font-weight:bold;color:#111;letter-spacing:0.2px;">Cấp phát</div>
<svg class="r" style="left:1692.5px;top:593px" width="10" height="14" viewBox="0 0 10 14"><g fill="none" stroke="#c6c8d2" stroke-width="1.3" stroke-linecap="round"><path d="M2.6 1 H7.6 V7.6 H2.6 Z M1.1 8 H9.1 M5.1 8 V12.8"/></g></svg>
<div class="r" style="left:1682px;top:583px;width:50px;height:33px;overflow:hidden;">
<div class="t" style="left:30px;top:10.7px;font-size:14px;line-height:14px;font-weight:bold;color:#111;letter-spacing:0.2px;">Nghiệp vụ</div></div>
<svg class="r" style="left:1791px;top:590px" width="19" height="19" viewBox="0 0 19 19"><g fill="none" stroke="#6b6b6b" stroke-width="1.3" stroke-linecap="round" stroke-linejoin="round"><path d="M1 4.2 H18 M6.2 4.2 V2.3 a1 1 0 0 1 1 -1 H11.8 a1 1 0 0 1 1 1 V4.2 M3.4 5.6 L4.4 16.4 a1 1 0 0 0 1 .9 H13.6 a1 1 0 0 0 1 -.9 L15.6 5.6"/></g><path d="M6.6 9.3 L11.2 13.9 M11.2 9.3 L6.6 13.9" stroke="#f04545" stroke-width="1.3"/></svg>
<div class="r" style="left:20px;top:617px;width:1808px;height:41px;background:#fff;"></div>
<div class="r" style="left:20px;top:657px;width:1808px;height:1px;background:#c5c7d1;"></div>
<div class="r" style="left:319px;top:617px;width:1px;height:40px;border-left:1px dotted #d3d5de;"></div>
<div class="r" style="left:439px;top:617px;width:1px;height:40px;border-left:1px dotted #d3d5de;"></div>
<div class="r" style="left:559px;top:617px;width:1px;height:40px;border-left:1px dotted #d3d5de;"></div>
<div class="r" style="left:739px;top:617px;width:1px;height:40px;border-left:1px dotted #d3d5de;"></div>
<div class="r" style="left:1039px;top:617px;width:1px;height:40px;border-left:1px dotted #d3d5de;"></div>
<div class="r" style="left:1159px;top:617px;width:1px;height:40px;border-left:1px dotted #d3d5de;"></div>
<div class="r" style="left:1279px;top:617px;width:1px;height:40px;border-left:1px dotted #d3d5de;"></div>
<div class="r" style="left:1399px;top:617px;width:1px;height:40px;border-left:1px dotted #d3d5de;"></div>
<div class="r" style="left:1519px;top:617px;width:1px;height:40px;border-left:1px dotted #d3d5de;"></div>
<div class="r" style="left:1682px;top:617px;width:1px;height:40px;border-left:1px dotted #d3d5de;"></div>
<div class="r" style="left:1732px;top:617px;width:1px;height:40px;border-left:1px dotted #d3d5de;"></div>
<div class="t" style="left:33px;top:630.3px;font-size:15px;line-height:15px;font-weight:normal;color:#1a1a1a;letter-spacing:0px;">Nhận kinh phí tạm ứng bằng lệnh chi...</div>
<div class="t" style="left:332px;top:629.5px;font-size:16px;line-height:16px;font-weight:normal;color:#1a1a1a;letter-spacing:0.1px;">00521</div>
<div class="t" style="right:1122px;text-align:right;top:629.5px;font-size:16px;line-height:16px;font-weight:normal;color:#1a1a1a;letter-spacing:0.1px;">200.000.000</div>
<div class="t" style="left:752px;top:630.3px;font-size:15px;line-height:15px;font-weight:normal;color:#1a1a1a;letter-spacing:0px;">Ngân sách Xã tự chủ</div>
<div class="t" style="left:1052px;top:629.5px;font-size:16px;line-height:16px;font-weight:normal;color:#1a1a1a;letter-spacing:0.1px;">819</div>
<div class="t" style="left:1172px;top:629.5px;font-size:16px;line-height:16px;font-weight:normal;color:#1a1a1a;letter-spacing:0.1px;">351</div>
<div class="t" style="left:1292px;top:629.5px;font-size:16px;line-height:16px;font-weight:normal;color:#1a1a1a;letter-spacing:0.1px;">7750</div>
<div class="t" style="left:1412px;top:629.5px;font-size:16px;line-height:16px;font-weight:normal;color:#1a1a1a;letter-spacing:0.1px;">7799</div>
<div class="t" style="left:1532px;top:630.3px;font-size:15px;line-height:15px;font-weight:normal;color:#1a1a1a;letter-spacing:0px;">Lệnh chi</div>
<div class="r" style="left:1682px;top:622px;width:50px;height:26px;overflow:hidden;">
<div class="t" style="left:13px;top:8.3px;font-size:15px;line-height:15px;font-weight:normal;color:#1a1a1a;letter-spacing:0px;">Nhận</div></div>
<svg class="r" style="left:1755.5px;top:627.5px" width="20" height="20" viewBox="0 0 20 20"><g fill="none" stroke="#6b6b6b" stroke-width="1.2"><circle cx="10" cy="10" r="8.6"/><path d="M10 6 V14 M6 10 H14"/></g></svg>
<svg class="r" style="left:1790.5px;top:628px" width="19" height="19" viewBox="0 0 19 19"><g fill="none" stroke="#6b6b6b" stroke-width="1.3" stroke-linecap="round" stroke-linejoin="round"><path d="M1 4.2 H18 M6.2 4.2 V2.3 a1 1 0 0 1 1 -1 H11.8 a1 1 0 0 1 1 1 V4.2 M3.4 5.6 L4.4 16.4 a1 1 0 0 0 1 .9 H13.6 a1 1 0 0 0 1 -.9 L15.6 5.6"/><path d="M7 8.5 V13.8 M10.8 8.5 V13.8" /></g></svg>
<div class="r" style="left:20px;top:658px;width:1808px;height:40px;background:#fff;"></div>
<div class="r" style="left:20px;top:697px;width:1808px;height:1px;background:#c5c7d1;"></div>
<div class="r" style="left:319px;top:658px;width:1px;height:39px;border-left:1px dotted #d3d5de;"></div>
<div class="r" style="left:439px;top:658px;width:1px;height:39px;border-left:1px dotted #d3d5de;"></div>
<div class="r" style="left:559px;top:658px;width:1px;height:39px;border-left:1px dotted #d3d5de;"></div>
<div class="r" style="left:739px;top:658px;width:1px;height:39px;border-left:1px dotted #d3d5de;"></div>
<div class="r" style="left:1039px;top:658px;width:1px;height:39px;border-left:1px dotted #d3d5de;"></div>
<div class="r" style="left:1159px;top:658px;width:1px;height:39px;border-left:1px dotted #d3d5de;"></div>
<div class="r" style="left:1279px;top:658px;width:1px;height:39px;border-left:1px dotted #d3d5de;"></div>
<div class="r" style="left:1399px;top:658px;width:1px;height:39px;border-left:1px dotted #d3d5de;"></div>
<div class="r" style="left:1519px;top:658px;width:1px;height:39px;border-left:1px dotted #d3d5de;"></div>
<div class="r" style="left:1682px;top:658px;width:1px;height:39px;border-left:1px dotted #d3d5de;"></div>
<div class="r" style="left:1732px;top:658px;width:1px;height:39px;border-left:1px dotted #d3d5de;"></div>
<div class="t" style="left:33px;top:670.8px;font-size:15px;line-height:15px;font-weight:normal;color:#1a1a1a;letter-spacing:0px;">Nhận kinh phí tạm ứng bằng lệnh chi...</div>
<div class="t" style="left:332px;top:670.0px;font-size:16px;line-height:16px;font-weight:normal;color:#1a1a1a;letter-spacing:0.1px;">00521</div>
<div class="t" style="right:1122px;text-align:right;top:670.0px;font-size:16px;line-height:16px;font-weight:normal;color:#1a1a1a;letter-spacing:0.1px;">50.000.000</div>
<div class="t" style="left:752px;top:670.8px;font-size:15px;line-height:15px;font-weight:normal;color:#1a1a1a;letter-spacing:0px;">Ngân sách Xã không tự chủ</div>
<div class="t" style="left:1052px;top:670.0px;font-size:16px;line-height:16px;font-weight:normal;color:#1a1a1a;letter-spacing:0.1px;">819</div>
<div class="t" style="left:1172px;top:670.0px;font-size:16px;line-height:16px;font-weight:normal;color:#1a1a1a;letter-spacing:0.1px;">351</div>
<div class="t" style="left:1292px;top:670.0px;font-size:16px;line-height:16px;font-weight:normal;color:#1a1a1a;letter-spacing:0.1px;">7750</div>
<div class="t" style="left:1412px;top:670.0px;font-size:16px;line-height:16px;font-weight:normal;color:#1a1a1a;letter-spacing:0.1px;">7799</div>
<div class="t" style="left:1532px;top:670.8px;font-size:15px;line-height:15px;font-weight:normal;color:#1a1a1a;letter-spacing:0px;">Lệnh chi</div>
<div class="r" style="left:1682px;top:662.5px;width:50px;height:26px;overflow:hidden;">
<div class="t" style="left:13px;top:8.3px;font-size:15px;line-height:15px;font-weight:normal;color:#1a1a1a;letter-spacing:0px;">Nhận</div></div>
<svg class="r" style="left:1755.5px;top:668.0px" width="20" height="20" viewBox="0 0 20 20"><g fill="none" stroke="#6b6b6b" stroke-width="1.2"><circle cx="10" cy="10" r="8.6"/><path d="M10 6 V14 M6 10 H14"/></g></svg>
<svg class="r" style="left:1790.5px;top:669px" width="19" height="19" viewBox="0 0 19 19"><g fill="none" stroke="#6b6b6b" stroke-width="1.3" stroke-linecap="round" stroke-linejoin="round"><path d="M1 4.2 H18 M6.2 4.2 V2.3 a1 1 0 0 1 1 -1 H11.8 a1 1 0 0 1 1 1 V4.2 M3.4 5.6 L4.4 16.4 a1 1 0 0 0 1 .9 H13.6 a1 1 0 0 0 1 -.9 L15.6 5.6"/><path d="M7 8.5 V13.8 M10.8 8.5 V13.8" /></g></svg>
<div class="t" style="left:33px;top:708.0px;font-size:15px;line-height:15px;font-weight:normal;color:#1a1a1a;letter-spacing:0px;">Tổng số: <b>2</b> bản ghi</div>
<div class="t" style="right:1119px;text-align:right;top:707.0px;font-size:16px;line-height:16px;font-weight:bold;color:#111;letter-spacing:0.2px;">250.000.000</div>
<div class="r" style="left:983px;top:732px;width:845px;height:1px;background:#c5c7d1;"></div>
<div class="r" style="left:20px;top:732px;width:963px;height:9px;background:#b8bcc6;"></div>
<div class="t" style="left:20.7px;top:547.5px;font-size:16px;line-height:16px;font-weight:normal;color:#0b73d1;letter-spacing:0.4px;-webkit-text-stroke:0.5px #0b73d1;text-decoration:underline;text-underline-offset:2.5px;text-decoration-thickness:1px;">Hạch toán đồng thời</div>
<svg class="r" style="left:1590px;top:540px" width="24" height="28" viewBox="0 0 24 28"><g fill="none" stroke="#0b73d1" stroke-width="1.8" stroke-linecap="round" stroke-linejoin="round"><path d="M8.6 24.5 H6.1 a1.5 1.5 0 0 1 -1.5 -1.5 V6.5 a1.5 1.5 0 0 1 1.5 -1.5 H19.2 a1.5 1.5 0 0 1 1.5 1.5 V13.2"/><path d="M16.1 15.5 V24.8 M12 20.8 L16.1 24.8 L20.2 20.8"/></g></svg>
<div class="t" style="left:1624.7px;top:548.1px;font-size:14px;line-height:14px;font-weight:bold;color:#0b73d1;letter-spacing:0.15px;">Cập nhật hạch toán đồng thời</div>
<div class="r" style="left:1570px;top:525px;width:267px;height:49.5px;border-style:solid;border-color:#fa4343;border-width:3px 4px 4.5px 5px;"></div>
<div class="r" style="left:275px;top:368px;width:604px;height:115px;border:3px solid #fa4343;"></div>
<div class="r" style="left:1419px;top:368px;width:316px;height:115px;border:3px solid #fa4343;"></div>
<div class="r" style="left:607px;top:307px;width:40px;height:40px;border-radius:50%;background:#fa4444;"></div>
<div class="t" style="left:617px;top:313.8px;font-size:28px;line-height:28px;font-weight:normal;color:#fff;letter-spacing:0px;width:20px;text-align:center;">1</div>
<div class="r" style="left:1556px;top:308px;width:40px;height:40px;border-radius:50%;background:#fa4444;"></div>
<div class="t" style="left:1566px;top:314.8px;font-size:28px;line-height:28px;font-weight:normal;color:#fff;letter-spacing:0px;width:20px;text-align:center;">2</div>
<div class="r" style="left:1509px;top:523px;width:40px;height:40px;border-radius:50%;background:#fa4444;"></div>
<div class="t" style="left:1519px;top:529.8px;font-size:28px;line-height:28px;font-weight:normal;color:#fff;letter-spacing:0px;width:20px;text-align:center;">3</div>
<div class="r" style="left:1740px;top:744px;width:40px;height:40px;border-radius:50%;background:#fa4444;"></div>
<div class="t" style="left:1750px;top:750.8px;font-size:28px;line-height:28px;font-weight:normal;color:#fff;letter-spacing:0px;width:20px;text-align:center;">4</div>
<div class="r" style="left:25px;top:801px;width:96px;height:34px;border:1.5px solid #e6e6ea;border-radius:6px;"></div>
<div class="t" style="left:54px;top:810.8px;font-size:15px;line-height:15px;font-weight:bold;color:#ffffff;letter-spacing:0px;">Đóng</div>
<svg class="r" style="left:583.5px;top:805px" width="28" height="28" viewBox="0 0 28 28"><g fill="none" stroke="#aeafb6" stroke-width="1.6" stroke-linecap="round" stroke-linejoin="round"><path d="M23.5 12.5 A11 11 0 1 1 19 4.6"/><path d="M19.8 1.8 V5.6 H16"/></g></svg>
<div class="t" style="left:618px;top:811.0px;font-size:15px;line-height:15px;font-weight:bold;color:#aeafb6;letter-spacing:0.2px;">Nạp</div>
<div class="r" style="left:674px;top:808px;width:2px;height:20px;background:#575966;"></div>
<div class="r" style="left:841px;top:808px;width:2px;height:20px;background:#575966;"></div>
<div class="r" style="left:966px;top:808px;width:2px;height:20px;background:#575966;"></div>
<div class="r" style="left:1088px;top:808px;width:2px;height:20px;background:#575966;"></div>
<svg class="r" style="left:701px;top:805px" width="26" height="26" viewBox="0 0 26 26"><g fill="none" stroke="#fff" stroke-width="1.8"><circle cx="13" cy="13" r="11.3"/></g><g fill="#fff"><circle cx="13" cy="8" r="1.3"/><circle cx="13" cy="13" r="1.3"/><circle cx="13" cy="18" r="1.3"/></g></svg>
<div class="t" style="left:736.4px;top:811.0px;font-size:15px;line-height:15px;font-weight:bold;color:#ffffff;letter-spacing:-0.1px;">Tiện ích</div>
<svg class="r" style="left:797px;top:812px" width="16" height="11" viewBox="0 0 16 11"><path d="M2.5 3 L8 8.5 L13.5 3" fill="none" stroke="#fff" stroke-width="1.8" stroke-linecap="round" stroke-linejoin="round"/></svg>
<svg class="r" style="left:867px;top:803px" width="28" height="28" viewBox="0 0 28 28"><g fill="none" stroke="#b3b4bb" stroke-width="1.6" stroke-linejoin="round"><path d="M7.5 9 V4 a1.5 1.5 0 0 1 1.5 -1.5 H19 a1.5 1.5 0 0 1 1.5 1.5 V9"/><path d="M7.5 20 H4.5 a2 2 0 0 1 -2 -2 V11 a2 2 0 0 1 2 -2 H23.5 a2 2 0 0 1 2 2 V18 a2 2 0 0 1 -2 2 H20.5"/><rect x="7.5" y="15" width="13" height="10.5" rx="1.5"/></g></svg>
<div class="t" style="left:903px;top:811.0px;font-size:15px;line-height:15px;font-weight:bold;color:#b3b4bb;letter-spacing:0px;">In</div>
<svg class="r" style="left:929.5px;top:811.5px" width="16" height="11" viewBox="0 0 16 11"><path d="M2.5 3.2 L8 8.4 L13.5 3.2" fill="none" stroke="#b3b4bb" stroke-width="1.5" stroke-linecap="round" stroke-linejoin="round"/></svg>
<svg class="r" style="left:986.5px;top:804px" width="24" height="26" viewBox="0 0 24 26"><g fill="none" stroke="#b3b4bb" stroke-width="1.6" stroke-linejoin="round" stroke-linecap="round"><path d="M14 1.5 H4 a2 2 0 0 0 -2 2 V22.5 a2 2 0 0 0 2 2 H18.5 a2 2 0 0 0 2 -2 V8 Z"/><path d="M14 1.5 V8 H20.5"/><path d="M6.5 12 H10 M6.5 16 H16 M6.5 20 H16"/></g></svg>
<div class="t" style="left:1019.5px;top:811.0px;font-size:15px;line-height:15px;font-weight:bold;color:#b3b4bb;letter-spacing:0.1px;">Duyệt</div>
<svg class="r" style="left:1108px;top:803.5px" width="28" height="28" viewBox="0 0 28 28"><g fill="none" stroke="#b3b4bb" stroke-width="1.6" stroke-linecap="round" stroke-linejoin="round"><path d="M2 6.5 H26 M9.5 6.5 V3.5 a1.5 1.5 0 0 1 1.5 -1.5 H17 a1.5 1.5 0 0 1 1.5 1.5 V6.5 M4.8 8.5 L6.3 24.5 a1.5 1.5 0 0 0 1.5 1.3 H20.2 a1.5 1.5 0 0 0 1.5 -1.3 L23.2 8.5 M11.5 12.5 V20.5 M16.5 12.5 V20.5"/></g></svg>
<div class="t" style="left:1145px;top:811.0px;font-size:15px;line-height:15px;font-weight:bold;color:#b3b4bb;letter-spacing:0.1px;">Xóa</div>
<div class="r" style="left:1619px;top:801px;width:96px;height:34px;border:1.5px solid #e6e6ea;border-radius:6px;"></div>
<div class="t" style="left:1649px;top:810.8px;font-size:15px;line-height:15px;font-weight:bold;color:#ffffff;letter-spacing:-0.1px;">Hoãn</div>
<div class="r" style="left:1726px;top:797px;width:99px;height:40px;border:3px solid #fa4343;"></div>
<div class="r" style="left:1729px;top:800.5px;width:93px;height:33.5px;background:#5b5fe9;border-radius:4px;"></div>
<div class="t" style="left:1763.5px;top:810.8px;font-size:15px;line-height:15px;font-weight:bold;color:#ffffff;letter-spacing:0px;">Cất</div>
</body></html>
